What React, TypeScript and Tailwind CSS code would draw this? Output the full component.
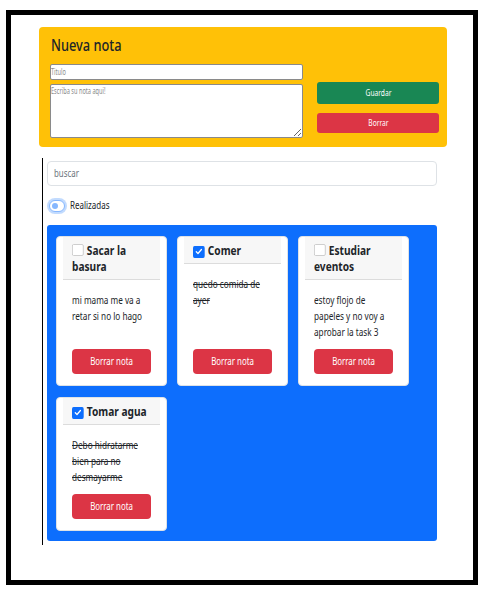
import React from "react";

const FONT: React.CSSProperties = { fontFamily: '"Noto Sans", "Liberation Sans", sans-serif' };

type Note = { title: string; body: string; done: boolean };

const notes: Note[] = [
  { title: "Sacar la basura", body: "mi mama me va a retar si no lo hago", done: false },
  { title: "Comer", body: "quedo comida de ayer", done: true },
  { title: "Estudiar eventos", body: "estoy flojo de papeles y no voy a aprobar la task 3", done: false },
  { title: "Tomar agua", body: "Debo hidratarme bien para no desmayarme", done: true },
];

function Check({ checked }: { checked: boolean }) {
  return checked ? (
    <span className="inline-flex items-center justify-center w-[15px] h-[12px] rounded-[2px] bg-[#0d6efd] align-[-1px] mr-[4px]">
      <svg width="11" height="9" viewBox="0 0 20 20" preserveAspectRatio="none">
        <path d="M4 10.5l4 4 8-9" fill="none" stroke="#fff" strokeWidth="3" strokeLinecap="round" strokeLinejoin="round" />
      </svg>
    </span>
  ) : (
    <span className="inline-block w-[15px] h-[12px] rounded-[2px] bg-white border border-[#c8c8c8] align-[-1px] mr-[4px]" />
  );
}

function Card({ note }: { note: Note }) {
  return (
    <div className="w-[111px] bg-white rounded-[4px] border border-[#dee2e6] flex flex-col">
      <div className="mx-[6px] bg-[#f7f7f7] border-b border-[#dcdcdc] pl-[9px] py-[5px] overflow-visible">
        <h5 className="w-[101px] origin-left scale-x-[0.78] text-[13px] leading-[16px] font-bold text-[#212529]">
          <Check checked={note.done} />
          {note.title}
        </h5>
      </div>
      <div className="flex-1 flex flex-col px-[15px] pt-[12px] pb-[11px]">
        <p
          className={`w-[101px] origin-left scale-x-[0.78] text-[10.5px] leading-[16px] text-[#212529] mb-[9px] ${
            note.done ? "line-through" : ""
          }`}
        >
          {note.body}
        </p>
        <button className="mt-auto h-[25px] w-full rounded-[4px] bg-[#dc3545] text-white text-[10.5px]" style={FONT}>
          <span className="inline-block scale-x-[0.75]">Borrar nota</span>
        </button>
      </div>
    </div>
  );
}

export default function App() {
  return (
    <div className="w-[498px] h-[590px] bg-white pl-[6px] pt-[10px]" style={FONT}>
      <div className="w-[472px] h-[575px] border-[5px] border-black bg-white flex flex-col">
        <div className="shrink-0 ml-[28px] mt-[12px] w-[408px] h-[120px] bg-[#ffc107] rounded-[4px] pl-[11px] pr-[8px] pt-[9px]">
          <h3 className="text-[16px] leading-[19px] font-medium text-[#212529] ml-[1px] mb-[9px]">
            <span className="inline-block origin-left scale-x-[0.8]">Nueva nota</span>
          </h3>
          <div className="flex gap-[14px]">
            <div className="w-[253px] flex flex-col gap-[4px]">
              <div className="relative">
                <input className="block h-[16px] w-full bg-white border border-[#8a8a8a] rounded-[2px] px-[1px] text-[8.5px] outline-none" />
                <span className="pointer-events-none absolute left-[1px] top-0 h-[16px] flex items-center text-[8.5px] text-[#8a8a8a]">
                  <span className="inline-block origin-left scale-x-[0.66]">Titulo</span>
                </span>
              </div>
              <div className="relative">
                <textarea className="block h-[54px] w-full bg-white border border-[#8a8a8a] rounded-[2px] px-[1px] py-0 text-[8.5px] outline-none resize-y" />
                <span className="pointer-events-none absolute left-[1px] top-[1px] leading-[12px] text-[8.5px] text-[#8a8a8a]">
                  <span className="inline-block origin-left scale-x-[0.66] whitespace-nowrap">Escriba su nota aqui!</span>
                </span>
              </div>
            </div>
            <div className="w-[122px] flex flex-col pt-[18px] gap-[9px]">
              <button style={FONT} className="h-[22px] w-full rounded-[3px] bg-[#198754] text-white text-[9.5px]">
                <span className="inline-block scale-x-[0.7]">Guardar</span>
              </button>
              <button style={FONT} className="h-[20px] w-full rounded-[3px] bg-[#dc3545] text-white text-[9.5px]">
                <span className="inline-block scale-x-[0.7]">Borrar</span>
              </button>
            </div>
          </div>
        </div>

        <div className="shrink-0 ml-[31px] mt-[11px] w-[395px] border-l border-black pl-[4px] pt-[3px] pb-[4px]">
          <div className="relative">
            <input className="block h-[25px] w-full bg-white border border-[#dee2e6] rounded-[4px] px-[7px] text-[10.5px] outline-none" />
            <span className="pointer-events-none absolute left-[7px] top-0 h-[25px] flex items-center text-[10.5px] text-[#6c757d]">
              <span className="inline-block origin-left scale-x-[0.75]">buscar</span>
            </span>
          </div>
          <div className="flex items-center gap-[4px] mt-[12px] h-[15px]">
            <span className="relative ml-[2px] w-[16px] h-[12px] rounded-full border border-[#86b7fe] bg-white shadow-[0_0_0_2px_rgba(13,110,253,0.25)]">
              <span className="absolute left-[2px] top-[2px] w-[6px] h-[6px] rounded-full bg-[#86b7fe]" />
            </span>
            <span className="text-[10px] text-[#212529] ml-[1px]">
              <span className="inline-block origin-left scale-x-[0.8]">Realizadas</span>
            </span>
          </div>
          <div className="mt-[12px] bg-[#0d6efd] rounded-[3px] pl-[9px] pr-[9px] pt-[11px] pb-[10px] flex flex-wrap gap-x-[10px] gap-y-[11px]">
            {notes.map((n) => (
              <Card key={n.title} note={n} />
            ))}
          </div>
        </div>
      </div>
    </div>
  );
}
